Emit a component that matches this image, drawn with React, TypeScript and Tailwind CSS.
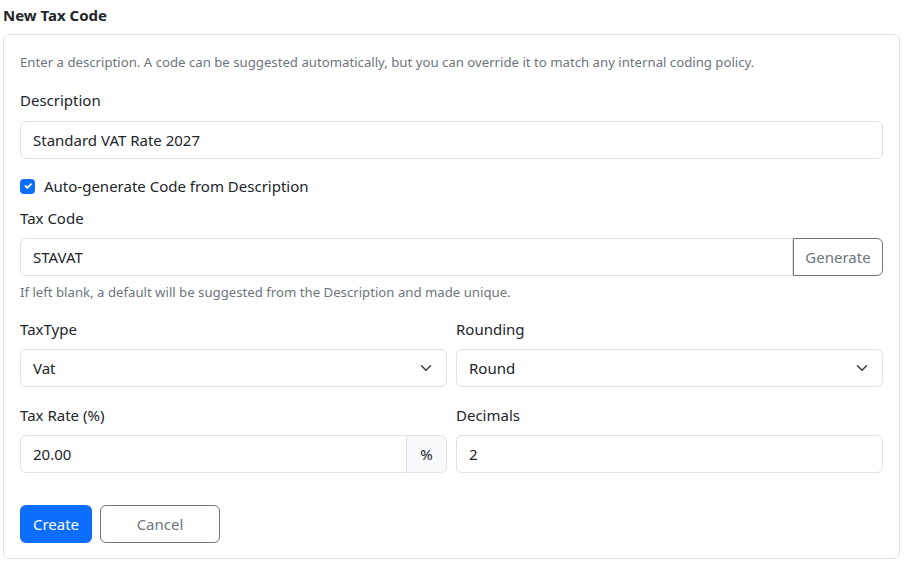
import React from 'react';

const inputCls =
  'h-[38px] w-full rounded-[6px] border border-[#dee2e6] bg-white px-3 text-[15px] leading-[24px] text-[#212529] outline-none';

function Chevron() {
  return (
    <svg className="h-3 w-3 text-[#343a40]" viewBox="0 0 16 16" fill="none" stroke="currentColor">
      <path strokeLinecap="round" strokeLinejoin="round" strokeWidth={2} d="M2 5l6 6 6-6" />
    </svg>
  );
}

function SelectBox({ value }: { value: string }) {
  return (
    <div className="flex h-[38px] w-full items-center justify-between rounded-[6px] border border-[#dee2e6] bg-white pl-3 pr-[14px] text-[15px] text-[#212529]">
      <span>{value}</span>
      <Chevron />
    </div>
  );
}

export default function App() {
  return (
    <div
      className="w-[905px] px-[3px] text-[#212529]"
      style={{ fontFamily: '"Noto Sans", "Open Sans", sans-serif' }}
    >
      <h1 className="pt-[5px] text-[15px] font-bold leading-[20px]">New Tax Code</h1>

      <div className="mt-[9px] w-[897px] rounded-[6px] border border-[#dee2e6] px-4 pb-[15px] pt-[17px]">
        {/* Intro */}
        <p className="text-[13.2px] leading-[20px] text-[#6c757d]">
          Enter a description. A code can be suggested automatically, but you can override it to match any internal coding policy.
        </p>

        {/* Description */}
        <label className="mt-4 block text-[15px] leading-[24px]">Description</label>
        <div className="mt-[9px]">
          <input className={inputCls} defaultValue="Standard VAT Rate 2027" />
        </div>

        {/* Auto-generate */}
        <div className="mt-[15px] flex h-[24px] items-center gap-[9px]">
          <span className="flex h-[15px] w-[15px] items-center justify-center rounded-[4px] bg-[#0d6efd]">
            <svg className="h-[12px] w-[12px]" viewBox="0 0 20 20" fill="none" stroke="#fff">
              <path strokeLinecap="round" strokeLinejoin="round" strokeWidth={3} d="M6 10l3 3 6-6" />
            </svg>
          </span>
          <span className="text-[15px] leading-[24px]">Auto-generate Code from Description</span>
        </div>

        {/* Tax Code */}
        <label className="mt-[8px] block text-[15px] leading-[24px]">Tax Code</label>
        <div className="mt-[8px] flex h-[38px]">
          <input
            className="h-[38px] flex-1 rounded-l-[6px] border border-[#dee2e6] bg-white px-3 text-[15px] text-[#212529] outline-none"
            defaultValue="STAVAT"
          />
          <button className="h-[38px] w-[90px] rounded-r-[6px] border border-[#6c757d] text-[15px] text-[#6c757d]">
            Generate
          </button>
        </div>
        <p className="mt-[6px] text-[13.2px] leading-[20px] text-[#6c757d]">
          If left blank, a default will be suggested from the Description and made unique.
        </p>

        {/* TaxType / Rounding */}
        <div className="mt-[15px] grid grid-cols-2 gap-x-[9px]">
          <div>
            <label className="block text-[15px] leading-[24px]">TaxType</label>
            <div className="mt-[8px]">
              <SelectBox value="Vat" />
            </div>
          </div>
          <div>
            <label className="block text-[15px] leading-[24px]">Rounding</label>
            <div className="mt-[8px]">
              <SelectBox value="Round" />
            </div>
          </div>
        </div>

        {/* Tax Rate / Decimals */}
        <div className="mt-[16px] grid grid-cols-2 gap-x-[9px]">
          <div>
            <label className="block text-[15px] leading-[24px]">Tax Rate (%)</label>
            <div className="mt-[8px] flex h-[38px]">
              <input
                className="h-[38px] min-w-0 flex-1 rounded-l-[6px] border border-[#dee2e6] bg-white px-3 text-[15px] text-[#212529] outline-none"
                defaultValue="20.00"
              />
              <span className="flex h-[38px] w-[40px] items-center justify-center rounded-r-[6px] border border-l-0 border-[#dee2e6] bg-[#f8f9fa] text-[15px]">
                %
              </span>
            </div>
          </div>
          <div>
            <label className="block text-[15px] leading-[24px]">Decimals</label>
            <div className="mt-[8px]">
              <input className={inputCls} defaultValue="2" />
            </div>
          </div>
        </div>

        {/* Actions */}
        <div className="mt-[32px] flex gap-2">
          <button className="h-[38px] w-[72px] rounded-[6px] bg-[#0d6efd] text-[15px] text-white">Create</button>
          <button className="h-[38px] w-[120px] rounded-[6px] border border-[#6c757d] text-[15px] text-[#6c757d]">
            Cancel
          </button>
        </div>
      </div>
    </div>
  );
}
